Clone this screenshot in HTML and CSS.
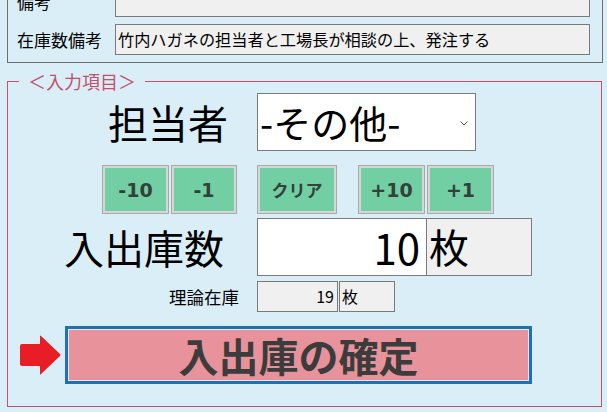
FILE: index.html
```html
<!DOCTYPE html>
<html lang="ja">
<head>
    <meta charset="UTF-8">
    <meta name="viewport" content="width=device-width, initial-scale=1.0">
    <title>入出庫</title>
    <link rel="stylesheet" href="styles.css">
</head>
<body>
    <div class="page">
        <div class="info">
            <div class="info-row">
                <label class="info-label">備考</label>
                <div class="info-value"></div>
            </div>
            <div class="info-row">
                <label class="info-label">在庫数備考</label>
                <div class="info-value">竹内ハガネの担当者と工場長が相談の上、発注する</div>
            </div>
        </div>

        <fieldset class="entry">
            <legend>＜入力項目＞</legend>

            <div class="row row-person">
                <label class="big-label">担当者</label>
                <div class="select">
                    <span>-その他-</span>
                    <svg class="chevron" width="8" height="5" viewBox="0 0 8 5"><path d="M0.5 0.5 L4 4 L7.5 0.5" fill="none" stroke="#555" stroke-width="1"/></svg>
                </div>
            </div>

            <div class="steps">
                <button class="step w67">-10</button>
                <button class="step w66">-1</button>
                <button class="step w80 clear">クリア</button>
                <button class="step w67">+10</button>
                <button class="step w67">+1</button>
            </div>

            <div class="row row-qty">
                <label class="big-label">入出庫数</label>
                <div class="qty">10</div>
                <div class="unit">枚</div>
            </div>

            <div class="row row-stock">
                <label class="small-label">理論在庫</label>
                <div class="stock">19</div>
                <div class="stock-unit">枚</div>
            </div>

            <div class="confirm-row">
                <svg class="arrow" width="41" height="40" viewBox="0 0 41 40">
                    <path d="M2 9 H20 V1 Q20 0 21 1 L40 19 Q41 20 40 21 L21 39 Q20 40 20 39 V31 H2 Q0 31 0 29 V11 Q0 9 2 9 Z" fill="#e81d25"/>
                </svg>
                <button class="confirm">入出庫の確定</button>
            </div>
        </fieldset>
    </div>
</body>
</html>
```

FILE: styles.css
```css
body {
    margin: 0;
    background: #daeef7;
    font-family: "Noto Sans CJK JP", "Noto Sans", sans-serif;
    color: #000;
    overflow: hidden;
}
.page {
    padding: 0 4px 0 7px;
}
.info {
    margin-top: -22px;
    border: 1px solid #6d6d6d;
    padding: 7px 12px 7px 8px;
    display: flex;
    flex-direction: column;
    gap: 7px;
}
.info-row {
    display: flex;
    align-items: center;
}
.info-label {
    width: 98px;
    font-size: 17px;
    padding-left: 1px;
}
.info-value {
    flex: 1;
    height: 29px;
    line-height: 29px;
    border: 1px solid #7a7a7a;
    background: #f0f0f0;
    padding-left: 2px;
    font-size: 16.2px;
    white-space: nowrap;
}
.entry {
    margin: 8px 1px 0 0;
    border: 1px solid #c8506e;
    padding: 2px 0 22px 0;
}
.entry legend {
    margin-left: 11px;
    padding: 0 9px;
    font-size: 18px;
    line-height: 20px;
    color: #c4506c;
}
.row {
    display: flex;
    align-items: center;
}
.big-label {
    width: 249px;
    box-sizing: border-box;
    text-align: right;
    font-size: 40px;
    line-height: 1;
}
.row-person .big-label {
    padding-right: 29px;
}
.row-qty .big-label {
    padding-right: 33px;
}
.select {
    width: 219px;
    height: 58px;
    box-sizing: border-box;
    border: 1px solid #7a7a7a;
    background: #fff;
    display: flex;
    align-items: center;
    justify-content: space-between;
    padding: 0 7px 0 2px;
    font-size: 38px;
}
.select span {
    margin-top: -2px;
}
.chevron {
    margin-top: 2px;
}
.steps {
    display: flex;
    margin: 14px 0 0 94px;
}
.step {
    height: 49px;
    background: #72cfa3;
    border: 1px solid #a9a9a9;
    box-shadow: inset 0 0 0 2px #d6d6d6;
    font-family: "DejaVu Sans", sans-serif;
    font-weight: bold;
    font-size: 19px;
    color: #33413b;
    padding: 0;
    margin-right: 2px;
}
.step.clear {
    font-family: "Noto Sans CJK JP", sans-serif;
    font-size: 17px;
    margin-left: 18px;
    margin-right: 21px;
}
.w66 { width: 66px; }
.w67 { width: 67px; }
.w80 { width: 80px; }
.row-qty {
    margin-top: 4px;
}
.qty {
    width: 170px;
    height: 58px;
    box-sizing: border-box;
    border: 1px solid #7a7a7a;
    background: #fff;
    text-align: right;
    font-size: 42px;
    line-height: 56px;
    padding-right: 6px;
}
.unit {
    width: 105px;
    height: 58px;
    box-sizing: border-box;
    border: 1px solid #7a7a7a;
    border-left: 0;
    background: #f0f0f0;
    font-size: 40px;
    line-height: 54px;
    padding-left: 2px;
}
.row-stock {
    margin-top: 5px;
}
.small-label {
    width: 249px;
    box-sizing: border-box;
    text-align: right;
    padding-right: 18px;
    font-size: 17.5px;
}
.stock {
    width: 76px;
    height: 29px;
    border: 1px solid #7a7a7a;
    background: #f0f0f0;
    text-align: right;
    padding-right: 3px;
    font-size: 16px;
    line-height: 29px;
    margin-right: 1px;
}
.stock-unit {
    width: 52px;
    height: 29px;
    border: 1px solid #7a7a7a;
    background: #f0f0f0;
    padding-left: 2px;
    font-size: 16px;
    line-height: 29px;
}
.confirm-row {
    display: flex;
    align-items: center;
    margin: 14px 0 0 12px;
}
.arrow {
    margin-right: 4px;
}
.confirm {
    width: 467px;
    height: 58px;
    background: #e8929b;
    border: 3px solid #1c72b8;
    box-shadow: inset 0 0 0 1px #e6e6f0;
    font-family: "Noto Sans CJK JP", sans-serif;
    font-weight: bold;
    font-size: 40px;
    color: #3c3c3c;
    padding: 0;
    line-height: 1;
}
```
